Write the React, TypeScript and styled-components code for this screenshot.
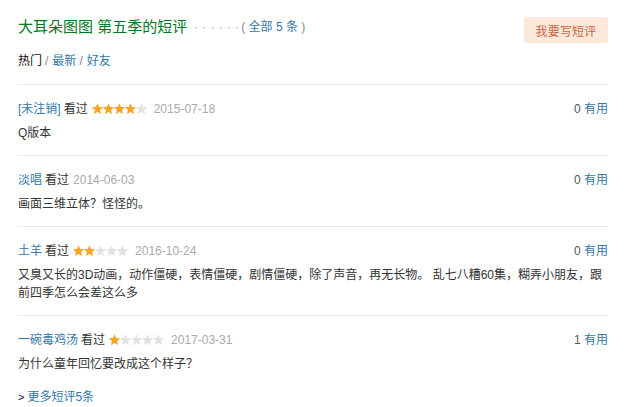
import styled, { createGlobalStyle } from 'styled-components'

const GlobalStyle = createGlobalStyle`
  html, body {
    margin: 0;
    padding: 0;
    background: #fff;
  }
  body {
    font-family: 'Liberation Sans', 'Noto Sans CJK SC', sans-serif;
    font-size: 12px;
    color: #333;
  }
`

const Page = styled.div`
  width: 632px;
  box-sizing: border-box;
  padding: 0 24px 0 18px;
`

const Header = styled.div`
  display: flex;
  justify-content: space-between;
  align-items: flex-start;
  padding-top: 17px;
`

const Title = styled.h2`
  margin: 0;
  font-size: 15px;
  font-weight: normal;
  line-height: 20px;
  color: #007722;
  display: flex;
  align-items: center;
`

const Dots = styled.span`
  margin-left: 7px;
  font-size: 12px;
  letter-spacing: 0.4px;
  color: #aaa;
`

const Total = styled.span`
  margin-left: 2px;
  font-size: 12px;
  color: #888;
`

const Link = styled.a`
  color: #3377aa;
  text-decoration: none;
  cursor: pointer;
`

const WriteButton = styled.a`
  display: flex;
  align-items: center;
  justify-content: center;
  width: 84px;
  height: 26px;
  border-radius: 3px;
  background: #fbe8da;
  color: #ca6445;
  font-size: 12px;
  letter-spacing: 0.2px;
  cursor: pointer;
`

const Tabs = styled.div`
  margin: 8px 0 13px;
  line-height: 20px;
  font-size: 12px;
  color: #888;
`

const Current = styled.span`
  color: #111;
`

const Sep = styled.span`
  margin: 0 4px 0 3px;
`

const Item = styled.div`
  border-top: 1px solid #ececec;
  padding: 14px 0 13px;
`

const InfoRow = styled.div`
  display: flex;
  justify-content: space-between;
  align-items: center;
  height: 20px;
  line-height: 20px;
`

const Info = styled.div`
  display: flex;
  align-items: center;
  color: #333;
`

const Watched = styled.span`
  margin-left: 3px;
`

const StarBox = styled.svg`
  margin-left: 4px;
  display: block;
`

const DateText = styled.span<{ $gap: number }>`
  margin-left: ${p => p.$gap}px;
  color: #aaa;
`

const Votes = styled.div`
  color: #555;
`

const Content = styled.p`
  margin: 5px 0 0;
  line-height: 18px;
  color: #333;
`

const More = styled.div`
  margin-top: 1px;
  line-height: 20px;
  color: #111;
`

const Arrow = styled.span`
  font-size: 11px;
  margin-right: 3px;
`

const starPath = (cx: number) => {
  const pts: string[] = []
  for (let i = 0; i < 10; i++) {
    const r = i % 2 === 0 ? 6 : 2.7
    const a = (Math.PI / 5) * i - Math.PI / 2
    pts.push(`${(cx + r * Math.cos(a)).toFixed(2)},${(6.2 + r * Math.sin(a)).toFixed(2)}`)
  }
  return pts.join(' ')
}

const Stars = ({ n }: { n: number }) => (
  <StarBox width={55} height={12} viewBox="0 0 55 12">
    {[0, 1, 2, 3, 4].map(i => (
      <polygon key={i} points={starPath(5.5 + i * 11)} fill={i < n ? '#f7a323' : '#e2e2e2'} />
    ))}
  </StarBox>
)

type Comment = {
  user: string
  stars: number
  date: string
  votes: number
  text: string
}

const comments: Comment[] = [
  { user: '[未注销]', stars: 4, date: '2015-07-18', votes: 0, text: 'Q版本' },
  { user: '淡唱', stars: 0, date: '2014-06-03', votes: 0, text: '画面三维立体？怪怪的。' },
  {
    user: '土羊',
    stars: 2,
    date: '2016-10-24',
    votes: 0,
    text: '又臭又长的3D动画，动作僵硬，表情僵硬，剧情僵硬，除了声音，再无长物。 乱七八糟60集，糊弄小朋友，跟前四季怎么会差这么多',
  },
  { user: '一碗毒鸡汤', stars: 1, date: '2017-03-31', votes: 1, text: '为什么童年回忆要改成这个样子？' },
]

export default function App() {
  return (
    <>
      <GlobalStyle />
      <Page>
        <Header>
          <Title>
            大耳朵图图 第五季的短评
            <Dots>· · · · · ·</Dots>
            <Total>
              ( <Link>全部 5 条</Link> )
            </Total>
          </Title>
          <WriteButton>我要写短评</WriteButton>
        </Header>

        <Tabs>
          <Current>热门</Current>
          <Sep>/</Sep>
          <Link>最新</Link>
          <Sep>/</Sep>
          <Link>好友</Link>
        </Tabs>

        {comments.map(c => (
          <Item key={c.date}>
            <InfoRow>
              <Info>
                <Link>{c.user}</Link>
                <Watched>看过</Watched>
                {c.stars > 0 && <Stars n={c.stars} />}
                <DateText $gap={c.stars > 0 ? 7 : 4}>{c.date}</DateText>
              </Info>
              <Votes>
                {c.votes} <Link>有用</Link>
              </Votes>
            </InfoRow>
            <Content>{c.text}</Content>
          </Item>
        ))}

        <More>
          <Arrow>&gt;</Arrow>
          <Link>更多短评5条</Link>
        </More>
      </Page>
    </>
  )
}
